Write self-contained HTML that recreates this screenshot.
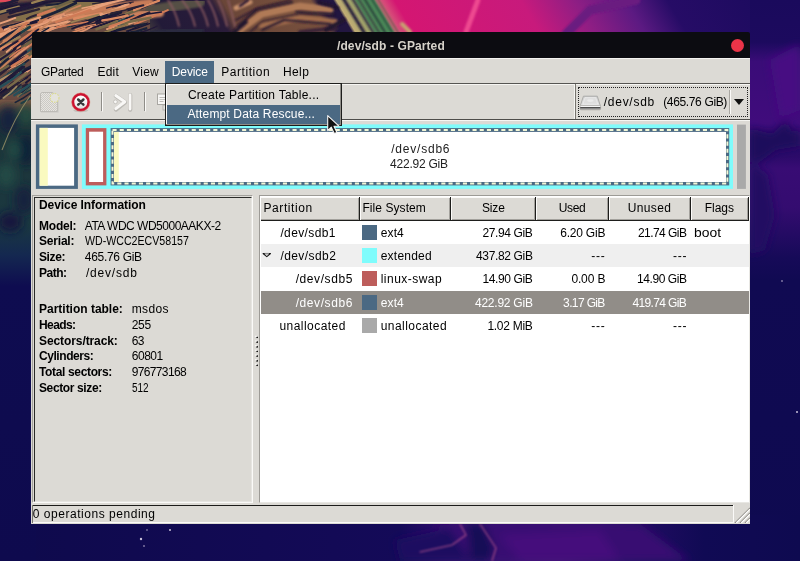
<!DOCTYPE html>
<html lang="en"><head><meta charset="utf-8"><title>/dev/sdb - GParted</title>
<style>
*{box-sizing:border-box;margin:0;padding:0}
html,body{width:800px;height:561px;overflow:hidden}
body{position:relative;font-family:"Liberation Sans",sans-serif;font-size:12px;background:#0e0a50}
.a{position:absolute}
.t{position:absolute;white-space:pre;line-height:16px;font-size:12px;color:#000}
.b{font-weight:700}
#bg{left:0;top:0;width:800px;height:561px}
#win{left:31px;top:58px;width:719px;height:466px;background:#dcdad5}
</style></head><body>
<svg id="bg" class="a" width="800" height="561" viewBox="0 0 800 561">
<defs>
<linearGradient id="gtop" x1="0" x2="1" y1="0" y2="0">
<stop offset="0" stop-color="#7a5244"/><stop offset=".155" stop-color="#86604a"/><stop offset=".185" stop-color="#4c4640"/>
<stop offset=".21" stop-color="#221a38"/><stop offset=".285" stop-color="#2a1c3a"/><stop offset=".30" stop-color="#6a4638"/>
<stop offset=".405" stop-color="#7a523e"/><stop offset=".415" stop-color="#221640"/><stop offset=".432" stop-color="#221640"/>
<stop offset=".436" stop-color="#c0ac74"/><stop offset=".455" stop-color="#9aa068"/><stop offset=".46" stop-color="#4e8a58"/>
<stop offset=".48" stop-color="#4e8a58"/><stop offset=".485" stop-color="#d8607c"/><stop offset=".505" stop-color="#d41672"/><stop offset=".655" stop-color="#c81a7c"/>
<stop offset=".72" stop-color="#8e1e84"/><stop offset=".78" stop-color="#5c1a82"/><stop offset=".83" stop-color="#260c66"/>
<stop offset="1" stop-color="#180a5c"/></linearGradient>
<linearGradient id="gleft" x1="0" x2="0" y1="0" y2="1">
<stop offset="0" stop-color="#7a5244"/><stop offset=".12" stop-color="#8a6048"/><stop offset=".145" stop-color="#54483c"/>
<stop offset=".17" stop-color="#1e3438"/><stop offset=".36" stop-color="#1a3840"/><stop offset=".42" stop-color="#142850"/>
<stop offset=".48" stop-color="#0e0c50"/><stop offset="1" stop-color="#0e0a4e"/></linearGradient>
<linearGradient id="gright" x1="0" x2="0" y1="0" y2="1">
<stop offset="0" stop-color="#1a0a5c"/><stop offset=".075" stop-color="#1c0a5e"/><stop offset=".11" stop-color="#3a0c78"/><stop offset=".22" stop-color="#400c7c"/>
<stop offset=".25" stop-color="#2a0a68"/><stop offset=".28" stop-color="#2c0a6a"/><stop offset=".3" stop-color="#380c74"/><stop offset=".37" stop-color="#340c70"/>
<stop offset=".46" stop-color="#160a58"/><stop offset=".5" stop-color="#100a52"/><stop offset="1" stop-color="#0e0a50"/></linearGradient>
<linearGradient id="gbot" x1="0" x2="1" y1="0" y2="0">
<stop offset="0" stop-color="#0e0a4c"/><stop offset=".5" stop-color="#140a58"/><stop offset=".56" stop-color="#340c70"/>
<stop offset=".7" stop-color="#400e78"/><stop offset=".78" stop-color="#260c66"/><stop offset=".88" stop-color="#100a54"/><stop offset="1" stop-color="#0e0a50"/></linearGradient>
<filter id="bl0"><feGaussianBlur stdDeviation="0.7"/></filter>
<filter id="bl1"><feGaussianBlur stdDeviation="1.2"/></filter>
<filter id="bl3"><feGaussianBlur stdDeviation="4"/></filter>
</defs>
<rect width="800" height="561" fill="#0e0a50"/>
<g transform="matrix(1 0 0.6 1 -10 0)"><rect x="-20" y="0" width="840" height="40" fill="url(#gtop)"/></g>
<rect x="750" y="0" width="50" height="561" fill="url(#gright)"/>
<rect x="0" y="515" width="800" height="46" fill="url(#gbot)"/>
<rect x="0" y="33" width="36" height="528" fill="url(#gleft)"/>
<g stroke-linecap="round" fill="none" filter="url(#bl0)">
<path d="M-5 0H150V34H34V100H-5Z" fill="#6a4c42" stroke="none"/>
<path d="M-5 10L60 3L150 -4" stroke="#1a1236" stroke-width="9" filter="url(#bl1)"/>
<path d="M-2 1L9 0" stroke="#e24a5a" stroke-width="6" filter="url(#bl1)"/>
<path d="M20 19L55 9L100 4" stroke="#84704a" stroke-width="12" filter="url(#bl1)"/>
<path d="M-5 32L50 20L100 9L150 3" stroke="#c87c58" stroke-width="8" filter="url(#bl1)"/>
<path d="M95 25L140 15L160 13" stroke="#cc8460" stroke-width="8" filter="url(#bl1)"/>
<path d="M130 36L200 30" stroke="#2a2a40" stroke-width="8" filter="url(#bl1)"/>
<path d="M150 10L200 2" stroke="#545044" stroke-width="10" filter="url(#bl1)"/>
<path d="M57.9 21.0Q76.1 14.3 91.9 7.7" stroke="#e09470" stroke-width="2.0"/>
<path d="M82.1 8.3Q97.4 5.4 116.4 -0.4" stroke="#e8a07a" stroke-width="1.4"/>
<path d="M134.7 24.2Q149.4 18.3 167.8 10.1" stroke="#d07a56" stroke-width="2.1"/>
<path d="M79.9 28.5Q95.6 23.7 109.9 19.3" stroke="#221a38" stroke-width="2.0"/>
<path d="M31.7 35.9Q41.9 30.4 53.8 27.6" stroke="#e8a07a" stroke-width="2.2"/>
<path d="M104.9 15.6Q111.7 14.9 120.8 11.5" stroke="#e09470" stroke-width="1.3"/>
<path d="M-2.2 14.8Q12.1 10.0 28.1 7.7" stroke="#1c2238" stroke-width="1.6"/>
<path d="M39.9 34.8Q54.8 28.1 70.0 21.4" stroke="#e8a07a" stroke-width="1.4"/>
<path d="M92.3 8.4Q106.2 2.9 116.2 0.4" stroke="#e8a07a" stroke-width="2.0"/>
<path d="M119.7 35.1Q132.7 31.3 144.6 29.8" stroke="#dc8a62" stroke-width="1.5"/>
<path d="M138.4 9.3Q148.9 4.7 161.7 -0.6" stroke="#1c2238" stroke-width="2.5"/>
<path d="M-7.7 14.5Q7.1 9.8 18.9 6.9" stroke="#9a8054" stroke-width="2.9"/>
<path d="M13.1 32.9Q22.9 30.9 32.2 27.7" stroke="#e09470" stroke-width="2.2"/>
<path d="M48.2 18.4Q55.5 17.5 64.9 15.3" stroke="#1a1636" stroke-width="1.4"/>
<path d="M28.5 30.0Q45.9 26.5 66.2 23.1" stroke="#c8845c" stroke-width="1.9"/>
<path d="M88.0 22.9Q96.7 18.6 107.1 14.5" stroke="#221a38" stroke-width="2.7"/>
<path d="M-0.9 8.0Q7.6 5.8 17.5 2.1" stroke="#221a38" stroke-width="1.3"/>
<path d="M68.3 34.2Q78.0 30.4 91.4 25.9" stroke="#dc8a62" stroke-width="1.9"/>
<path d="M1.2 4.3Q10.7 3.0 18.3 -0.7" stroke="#221a38" stroke-width="2.8"/>
<path d="M100.6 25.9Q117.9 22.5 132.4 19.5" stroke="#8c7448" stroke-width="1.7"/>
<path d="M108.6 31.4Q118.3 25.1 131.5 21.2" stroke="#28505a" stroke-width="2.1"/>
<path d="M7.3 10.7Q23.3 7.2 39.7 1.5" stroke="#221a38" stroke-width="2.1"/>
<path d="M2.6 27.5Q13.0 25.2 23.4 22.2" stroke="#1a1636" stroke-width="2.0"/>
<path d="M128.1 10.7Q143.8 5.8 157.5 1.9" stroke="#1c2238" stroke-width="1.4"/>
<path d="M129.5 18.9Q140.6 17.0 149.3 12.5" stroke="#2a2034" stroke-width="2.3"/>
<path d="M122.0 15.1Q132.7 10.5 140.2 8.8" stroke="#8c7448" stroke-width="1.5"/>
<path d="M-0.4 35.3Q9.8 31.7 20.7 27.2" stroke="#e8a07a" stroke-width="1.8"/>
<path d="M64.1 12.7Q73.7 7.8 80.4 5.6" stroke="#c8845c" stroke-width="2.0"/>
<path d="M96.3 21.4Q109.4 16.0 120.3 12.0" stroke="#1a1636" stroke-width="2.2"/>
<path d="M106.9 29.1Q123.2 26.5 137.0 21.1" stroke="#e8a07a" stroke-width="1.8"/>
<path d="M92.7 8.8Q107.2 3.1 125.4 -0.9" stroke="#e8a07a" stroke-width="2.5"/>
<path d="M106.8 20.3Q124.1 16.2 139.2 9.5" stroke="#6e6244" stroke-width="2.1"/>
<path d="M3.1 33.7Q11.3 31.8 23.4 29.5" stroke="#d07a56" stroke-width="1.8"/>
<path d="M87.9 19.1Q103.5 14.3 117.4 7.7" stroke="#8c7448" stroke-width="1.8"/>
<path d="M86.2 26.4Q106.3 20.3 124.1 15.2" stroke="#2a2034" stroke-width="2.8"/>
<path d="M126.5 31.1Q137.1 28.6 149.5 23.6" stroke="#1a1636" stroke-width="1.3"/>
<path d="M22.7 31.5Q33.0 27.7 46.2 26.1" stroke="#dc8a62" stroke-width="1.4"/>
<path d="M67.5 26.6Q86.1 22.3 103.2 16.4" stroke="#1e3c44" stroke-width="1.8"/>
<path d="M55.9 21.0Q70.1 17.4 83.8 15.0" stroke="#c8845c" stroke-width="2.3"/>
<path d="M47.2 30.7Q55.6 28.0 65.8 25.3" stroke="#e09470" stroke-width="1.6"/>
<path d="M51.7 5.9Q70.1 1.1 89.3 -5.4" stroke="#2a2034" stroke-width="1.2"/>
<path d="M74.4 18.7Q88.9 15.8 100.9 13.5" stroke="#dc8a62" stroke-width="2.9"/>
<path d="M26.9 18.8Q33.9 15.1 44.6 13.0" stroke="#2a2034" stroke-width="2.0"/>
<path d="M95.3 35.2Q110.1 30.2 125.9 24.4" stroke="#221a38" stroke-width="1.6"/>
<path d="M5.7 26.9Q19.9 23.9 37.9 20.2" stroke="#1c2238" stroke-width="2.3"/>
<path d="M113.8 22.9Q123.9 19.4 133.6 15.3" stroke="#2c4a50" stroke-width="1.9"/>
<path d="M10.5 33.1Q23.3 28.3 32.7 25.2" stroke="#8c7448" stroke-width="2.5"/>
<path d="M139.8 32.2Q148.1 30.6 156.9 26.4" stroke="#221a38" stroke-width="1.4"/>
<path d="M71.5 26.0Q86.8 20.7 99.6 16.3" stroke="#1a1636" stroke-width="1.4"/>
<path d="M95.7 23.6Q109.4 18.4 121.0 12.5" stroke="#221a38" stroke-width="2.5"/>
<path d="M125.8 18.4Q145.3 14.0 161.4 12.0" stroke="#1a1636" stroke-width="1.5"/>
<path d="M-0.7 34.4Q12.0 30.7 25.3 26.5" stroke="#e8a07a" stroke-width="1.7"/>
<path d="M-8.0 25.8Q5.3 22.2 15.3 17.9" stroke="#e8a07a" stroke-width="1.9"/>
<path d="M4.2 28.9Q20.8 25.2 36.4 22.1" stroke="#1a1636" stroke-width="2.5"/>
<path d="M79.9 19.1Q87.7 18.2 98.2 14.7" stroke="#d07a56" stroke-width="1.7"/>
<path d="M10.0 13.2Q27.2 6.5 42.6 2.4" stroke="#221a38" stroke-width="2.7"/>
<path d="M41.3 17.9Q57.6 11.9 75.8 3.0" stroke="#1c2238" stroke-width="2.8"/>
<path d="M34.8 9.3Q47.9 7.7 59.8 4.9" stroke="#9a8054" stroke-width="2.3"/>
<path d="M104.3 35.3Q113.0 30.9 125.3 28.3" stroke="#1a1636" stroke-width="2.4"/>
<path d="M46.4 5.3Q60.5 4.3 74.1 0.2" stroke="#1c2238" stroke-width="2.1"/>
<path d="M85.7 29.5Q105.8 24.4 122.2 17.2" stroke="#1a1636" stroke-width="1.8"/>
<path d="M71.3 22.3Q84.5 17.8 98.9 14.6" stroke="#9a8054" stroke-width="1.8"/>
<path d="M88.3 21.1Q105.4 16.1 121.5 11.7" stroke="#1c2238" stroke-width="1.2"/>
<path d="M92.6 3.8Q110.5 1.3 131.7 -3.6" stroke="#2a2034" stroke-width="1.3"/>
<path d="M54.4 18.2Q65.0 15.2 72.3 14.2" stroke="#e8a07a" stroke-width="1.3"/>
<path d="M134.0 10.3Q144.8 5.6 159.1 0.6" stroke="#dc8a62" stroke-width="2.3"/>
<path d="M8.6 17.1Q23.3 13.9 39.0 9.2" stroke="#2a2034" stroke-width="2.4"/>
<path d="M112.3 6.7Q122.6 5.2 130.6 2.9" stroke="#221a38" stroke-width="1.6"/>
<path d="M43.9 11.2Q58.7 6.5 75.6 -1.2" stroke="#6e6244" stroke-width="2.4"/>
<path d="M127.4 31.9Q135.7 26.6 147.7 23.0" stroke="#1a1636" stroke-width="1.2"/>
<path d="M31.7 27.7Q46.4 21.8 61.2 17.7" stroke="#e8a07a" stroke-width="2.2"/>
<path d="M41.6 27.3Q56.0 25.2 67.7 21.5" stroke="#e8a07a" stroke-width="2.3"/>
<path d="M56.7 27.4Q71.5 24.8 87.8 21.8" stroke="#d07a56" stroke-width="1.7"/>
<path d="M101.9 33.3Q114.9 28.6 127.5 24.3" stroke="#8c7448" stroke-width="2.0"/>
<path d="M75.2 29.7Q83.7 26.4 95.6 24.4" stroke="#dc8a62" stroke-width="1.3"/>
<path d="M98.7 25.6Q115.4 19.8 128.7 15.0" stroke="#221a38" stroke-width="1.6"/>
<path d="M56.1 22.2Q72.0 16.0 89.3 10.3" stroke="#d07a56" stroke-width="2.0"/>
<path d="M130.2 32.4Q138.6 31.2 146.2 28.3" stroke="#1c2238" stroke-width="2.5"/>
<path d="M100.8 14.5Q115.6 10.2 128.3 3.7" stroke="#e8a07a" stroke-width="2.7"/>
<path d="M32.2 2.8Q52.4 -3.6 70.1 -7.3" stroke="#9a8054" stroke-width="2.4"/>
<path d="M72.0 28.8Q78.9 26.1 89.5 22.6" stroke="#1a1636" stroke-width="1.6"/>
<path d="M4.6 29.8Q22.3 23.1 40.3 17.3" stroke="#e8a07a" stroke-width="2.1"/>
<path d="M111.1 13.3Q128.9 9.0 143.4 5.2" stroke="#2a2034" stroke-width="2.1"/>
<path d="M113.9 24.7Q132.8 21.3 150.6 17.8" stroke="#7a6a48" stroke-width="2.4"/>
<path d="M96.5 29.3Q107.2 25.8 116.9 21.2" stroke="#7a6a48" stroke-width="2.5"/>
<path d="M38.1 15.2Q44.8 12.7 54.5 9.4" stroke="#d07a56" stroke-width="2.9"/>
<path d="M106.4 8.1Q119.1 4.1 133.3 2.0" stroke="#2a2034" stroke-width="1.2"/>
<path d="M43.9 22.0Q53.0 17.1 63.8 14.2" stroke="#e09470" stroke-width="2.3"/>
<path d="M103.6 12.6Q116.2 9.9 125.4 8.1" stroke="#c8845c" stroke-width="2.1"/>
<path d="M72.1 34.5Q83.1 32.0 91.8 26.5" stroke="#e09470" stroke-width="1.8"/>
<path d="M109.2 28.3Q119.0 23.5 129.1 19.5" stroke="#dc8a62" stroke-width="2.1"/>
<path d="M109.5 26.3Q127.2 20.7 141.5 13.3" stroke="#d07a56" stroke-width="1.8"/>
<path d="M9.7 27.2Q17.2 25.9 28.8 22.7" stroke="#c8845c" stroke-width="2.2"/>
<path d="M116.9 30.0Q131.7 25.8 145.0 24.2" stroke="#1c2238" stroke-width="2.2"/>
<path d="M102.3 20.5Q113.4 18.9 127.8 15.4" stroke="#dc8a62" stroke-width="2.3"/>
<path d="M-4.1 74.8Q10.5 68.1 25.9 61.0" stroke="#e8a07a" stroke-width="1.6"/>
<path d="M25.9 82.7Q36.4 75.2 47.1 64.8" stroke="#1a1636" stroke-width="1.8"/>
<path d="M19.5 81.9Q29.8 74.9 43.1 66.3" stroke="#2a2034" stroke-width="1.6"/>
<path d="M20.5 94.0Q28.9 91.1 35.2 85.3" stroke="#1e3c44" stroke-width="2.7"/>
<path d="M16.7 75.6Q26.4 71.4 32.5 66.9" stroke="#221a38" stroke-width="1.7"/>
<path d="M15.5 61.2Q22.9 56.2 29.3 53.0" stroke="#dc8a62" stroke-width="1.3"/>
<path d="M-4.7 42.3Q1.1 37.9 7.3 31.7" stroke="#dc8a62" stroke-width="2.8"/>
<path d="M1.0 92.7Q12.4 85.8 24.7 80.0" stroke="#7a6a48" stroke-width="2.5"/>
<path d="M3.7 41.0Q19.0 31.7 33.4 25.3" stroke="#d07a56" stroke-width="2.2"/>
<path d="M0.6 61.9Q9.6 52.9 20.3 46.3" stroke="#dc8a62" stroke-width="1.7"/>
<path d="M15.1 56.2Q23.8 49.6 35.4 41.7" stroke="#d07a56" stroke-width="2.0"/>
<path d="M25.5 73.0Q36.1 63.5 44.5 56.2" stroke="#e8a07a" stroke-width="2.2"/>
<path d="M6.2 66.7Q17.9 58.7 32.7 47.8" stroke="#28505a" stroke-width="1.9"/>
<path d="M-6.8 97.9Q5.2 91.2 13.2 82.6" stroke="#1a1636" stroke-width="2.6"/>
<path d="M10.9 47.8Q21.6 38.8 33.4 31.8" stroke="#d07a56" stroke-width="2.4"/>
<path d="M10.7 91.9Q19.4 87.7 26.8 84.7" stroke="#2a2034" stroke-width="2.7"/>
<path d="M13.5 87.2Q20.7 81.2 27.6 77.5" stroke="#1a1636" stroke-width="1.2"/>
<path d="M3.4 61.5Q11.8 54.6 23.9 46.6" stroke="#221a38" stroke-width="2.2"/>
<path d="M-6.5 101.4Q3.2 96.6 12.3 92.3" stroke="#2a2034" stroke-width="2.7"/>
<path d="M-1.3 96.9Q12.2 86.6 22.1 77.3" stroke="#2a2034" stroke-width="1.3"/>
<path d="M7.8 66.9Q15.8 61.3 24.9 56.7" stroke="#1a1636" stroke-width="1.8"/>
<path d="M18.0 96.5Q24.4 90.5 31.7 87.3" stroke="#7a6a48" stroke-width="2.0"/>
<path d="M14.4 73.7Q28.7 68.6 39.0 62.2" stroke="#1c2238" stroke-width="2.6"/>
<path d="M21.1 63.6Q33.2 55.5 44.8 45.1" stroke="#c8845c" stroke-width="2.4"/>
<path d="M-8.3 90.7Q-3.4 85.1 2.8 82.2" stroke="#2a2034" stroke-width="1.6"/>
<path d="M22.0 92.2Q32.8 83.1 44.0 75.1" stroke="#1c2238" stroke-width="1.6"/>
<path d="M0.3 49.2Q13.5 38.0 25.1 29.6" stroke="#e09470" stroke-width="2.6"/>
<path d="M0.0 95.0Q6.6 91.5 15.7 87.3" stroke="#8c7448" stroke-width="2.8"/>
<path d="M-4.7 96.3Q3.3 91.5 13.2 87.1" stroke="#1a1636" stroke-width="2.7"/>
<path d="M21.4 61.4Q28.6 55.0 38.7 47.4" stroke="#6e6244" stroke-width="2.6"/>
<path d="M-1.8 86.1Q11.9 77.7 22.6 68.9" stroke="#2c4a50" stroke-width="2.2"/>
<path d="M-3.3 59.3Q7.1 54.1 13.5 49.3" stroke="#7a6a48" stroke-width="1.3"/>
<path d="M8.1 74.0Q16.9 68.5 28.5 60.0" stroke="#1c2238" stroke-width="2.1"/>
<path d="M-4.8 51.5Q1.3 47.5 11.2 43.7" stroke="#dc8a62" stroke-width="2.8"/>
<path d="M16.5 64.6Q23.9 59.1 28.0 54.7" stroke="#6e6244" stroke-width="2.4"/>
<path d="M6.4 42.0Q16.7 35.4 29.7 27.1" stroke="#1e3c44" stroke-width="2.7"/>
<path d="M-5.7 78.9Q5.1 70.6 14.1 63.8" stroke="#2a2034" stroke-width="2.3"/>
<path d="M8.7 94.6Q15.3 91.9 21.3 86.9" stroke="#2c4a50" stroke-width="2.3"/>
<path d="M-5.2 49.7Q8.9 40.1 20.1 33.3" stroke="#2a2034" stroke-width="2.3"/>
<path d="M-7.7 51.4Q3.4 40.9 15.9 33.2" stroke="#c8845c" stroke-width="1.3"/>
<path d="M-0.1 79.8Q12.3 71.4 24.5 63.8" stroke="#2c4a50" stroke-width="2.2"/>
<path d="M-2.6 71.8Q8.1 61.2 19.9 52.3" stroke="#c8845c" stroke-width="1.8"/>
<path d="M24.9 42.7Q38.9 30.6 50.9 21.3" stroke="#c8845c" stroke-width="1.9"/>
<path d="M-2.9 97.0Q9.5 90.6 18.1 83.1" stroke="#2a2034" stroke-width="2.7"/>
<path d="M15.2 102.5Q23.2 98.7 31.4 92.3" stroke="#1c2238" stroke-width="1.5"/>
<path d="M1.8 61.6Q6.1 56.9 14.0 53.1" stroke="#7a6a48" stroke-width="2.2"/>
<path d="M14.4 95.3Q23.5 89.5 33.5 82.0" stroke="#28505a" stroke-width="2.5"/>
<path d="M-3.8 62.2Q6.9 55.4 15.6 48.8" stroke="#221a38" stroke-width="2.1"/>
<path d="M6.6 80.1Q14.8 74.5 21.4 69.7" stroke="#2a2034" stroke-width="1.2"/>
<path d="M-1.6 41.2Q7.6 33.6 19.0 28.4" stroke="#1c2238" stroke-width="2.2"/>
<path d="M-9.8 86.6Q1.1 79.0 15.8 72.4" stroke="#b08a64" stroke-width="2.6"/>
<path d="M2.6 45.3Q10.4 41.4 19.8 36.9" stroke="#9a8054" stroke-width="2.2"/>
<path d="M6.6 52.0Q12.6 46.6 18.3 43.3" stroke="#e8a07a" stroke-width="1.8"/>
<path d="M14.9 56.7Q22.3 51.1 28.1 46.2" stroke="#e09470" stroke-width="1.6"/>
<path d="M2.7 95.4Q13.3 90.7 21.0 84.4" stroke="#1c2238" stroke-width="1.3"/>
<path d="M6.3 40.7Q16.9 31.4 26.9 23.0" stroke="#d07a56" stroke-width="2.6"/>
<path d="M-7.4 89.6Q-2.6 84.8 5.7 80.7" stroke="#1c2238" stroke-width="1.8"/>
<path d="M0.5 71.8Q12.6 62.4 26.0 51.6" stroke="#221a38" stroke-width="2.4"/>
<path d="M7.8 87.5Q16.4 81.6 26.5 73.2" stroke="#7a6a48" stroke-width="2.5"/>
<path d="M22.3 47.7Q29.4 42.8 38.2 36.5" stroke="#6e6244" stroke-width="2.5"/>
<path d="M21.7 44.6Q35.9 35.3 48.7 27.8" stroke="#1c2238" stroke-width="1.5"/>
<path d="M5.8 79.4Q10.5 74.4 18.6 72.2" stroke="#9a8054" stroke-width="1.5"/>
<path d="M8.6 79.2Q24.0 71.1 36.1 65.7" stroke="#1a1636" stroke-width="1.7"/>
<path d="M-6.8 72.5Q1.0 63.9 10.7 56.9" stroke="#1c2238" stroke-width="2.1"/>
<path d="M-3.6 73.3Q3.4 68.3 8.3 65.8" stroke="#6e6244" stroke-width="2.5"/>
<path d="M19.3 96.6Q27.9 89.5 34.0 84.2" stroke="#2c4a50" stroke-width="1.1"/>
<path d="M3.1 50.0Q10.7 45.2 17.8 41.2" stroke="#221a38" stroke-width="1.9"/>
<path d="M-1.1 87.9Q11.5 80.8 20.8 72.3" stroke="#28505a" stroke-width="2.3"/>
<path d="M21.3 103.3Q31.1 97.4 39.4 94.2" stroke="#1e3c44" stroke-width="2.0"/>
<path d="M11.6 66.4Q19.2 61.9 27.6 56.1" stroke="#d07a56" stroke-width="2.5"/>
<path d="M-2.4 85.8Q8.3 77.6 22.0 66.5" stroke="#1c2238" stroke-width="2.1"/>
<path d="M12.4 48.0Q24.6 37.6 35.5 28.8" stroke="#d07a56" stroke-width="1.7"/>
<path d="M-5.0 40.9Q3.4 34.7 10.5 29.2" stroke="#e8a07a" stroke-width="1.5"/>
<path d="M13.8 48.9Q26.3 40.0 38.4 29.3" stroke="#1a1636" stroke-width="1.7"/>
<path d="M3.4 97.9Q11.4 92.7 16.6 86.5" stroke="#a08a64" stroke-width="1.8"/>
<path d="M-3.5 86.2Q10.5 77.5 24.0 66.9" stroke="#221a38" stroke-width="2.3"/>
<path d="M-6.4 51.2Q8.2 41.6 19.7 33.4" stroke="#1c2238" stroke-width="1.4"/>
<path d="M9.6 57.5Q16.4 51.1 25.1 47.3" stroke="#d07a56" stroke-width="1.7"/>
<path d="M-9.6 97.1Q-2.7 94.5 1.8 88.9" stroke="#1a1636" stroke-width="1.3"/>
<path d="M3.5 42.1Q12.4 35.2 20.1 27.7" stroke="#c8845c" stroke-width="2.0"/>
</g>
<g filter="url(#bl3)">
<ellipse cx="8" cy="120" rx="10" ry="14" fill="#12203c"/>
<ellipse cx="26" cy="150" rx="9" ry="16" fill="#102038"/>
<ellipse cx="6" cy="175" rx="10" ry="12" fill="#224a44"/>
<ellipse cx="24" cy="200" rx="10" ry="14" fill="#14243e"/>
<ellipse cx="10" cy="222" rx="12" ry="10" fill="#12183e"/>
<ellipse cx="26" cy="115" rx="8" ry="10" fill="#24483f"/>
<ellipse cx="14" cy="150" rx="6" ry="10" fill="#244c44"/>
</g>
<path d="M2 150Q14 118 30 96" stroke="#9a9468" stroke-width="1.1" fill="none" opacity=".8"/>
<g stroke="#8a5a60" stroke-width="1.6" fill="none" stroke-linecap="round" filter="url(#bl1)">
<path d="M168 0Q176 12 179 26"/>
<path d="M182 0Q192 12 195 26"/>
<path d="M196 0Q205 12 208 26"/>
<path d="M208 0Q215 12 218 26"/>
<path d="M218 0Q224 12 227 26"/>
<path d="M228 0Q232 12 235 26"/>
</g>
<g fill="none" stroke-linecap="round" filter="url(#bl1)">
<path d="M240 30L262 14L300 6L330 10" stroke="#b07a56" stroke-width="7"/>
<path d="M262 26L300 18L335 22" stroke="#a06c4c" stroke-width="6"/>
<path d="M236 8L250 2" stroke="#c8906a" stroke-width="5"/>
<path d="M250 32L262 22L300 14L334 16" stroke="#2a1830" stroke-width="1.6"/>
<path d="M236 20L258 8L290 0" stroke="#2a1830" stroke-width="1.8"/>
<path d="M300 32L336 28" stroke="#3a2438" stroke-width="4"/>
</g>
<g fill="none" stroke-linecap="round" filter="url(#bl1)">
<path d="M343 -2L365 34" stroke="#1e1438" stroke-width="3"/>
<path d="M352 -2L374 34" stroke="#2a2040" stroke-width="2"/>
<path d="M358 -2L380 34" stroke="#3a3a40" stroke-width="1.6"/>
<path d="M364 -2L386 34" stroke="#26403a" stroke-width="2.2"/>
<path d="M371 -2L393 34" stroke="#2a5040" stroke-width="1.8"/>
<path d="M377 -2L399 34" stroke="#6a5a50" stroke-width="1.6"/>
<path d="M238 26L256 10" stroke="#24142e" stroke-width="2.2"/>
<path d="M256 10L292 2" stroke="#24142e" stroke-width="2"/>
<path d="M262 30L284 20" stroke="#24142e" stroke-width="2"/>
<path d="M284 20L330 24" stroke="#24142e" stroke-width="2.2"/>
<path d="M296 12L334 14" stroke="#24142e" stroke-width="1.8"/>
<path d="M240 6L248 0" stroke="#24142e" stroke-width="2.5"/>
<path d="M318 2L338 8" stroke="#24142e" stroke-width="3"/>
<path d="M326 30L344 20" stroke="#24142e" stroke-width="4"/>
<path d="M232 34L246 22" stroke="#24142e" stroke-width="4"/>
</g>
<g fill="none" stroke-linecap="round" filter="url(#bl1)">
<path d="M478 0L466 32" stroke="#ee4a90" stroke-width="5"/>
<path d="M402 24L410 32" stroke="#c8a070" stroke-width="4"/>
<path d="M566 34L590 10L636 0" stroke="#6a1a80" stroke-width="9"/>
</g>
<g filter="url(#bl3)">
<path d="M750 128L772 134L786 120L792 132L800 130V146L776 150L760 162L750 160Z" fill="#1c0a5c"/>
<path d="M750 160L768 175L775 215L765 250L750 255Z" fill="#220a62"/>
<path d="M770 60L800 44V110L780 118Z" fill="#460e82"/>
<path d="M440 525L520 520L640 524L690 561H430Z" fill="#380c72"/>
<path d="M500 535L600 530L620 561H520Z" fill="#440e7c"/>
<path d="M395 540L450 528L470 561H400Z" fill="#1a0a60"/>
<path d="M464 524L484 524L494 548L490 561H470L468 536Z" fill="#160a56"/>
</g>
<g fill="none" stroke="#b0508c" stroke-width="1.1" stroke-linecap="round" filter="url(#bl1)">
<path d="M420 552L452 545L466 535L460 524"/><path d="M480 524L496 548L492 561"/>
</g>
<circle cx="141" cy="539" r="1.2" fill="#c8c0d8"/>
<circle cx="144" cy="546" r="0.8" fill="#c8c0d8"/>
<circle cx="170" cy="530" r="1" fill="#c8c0d8"/>
<circle cx="147" cy="530" r="0.7" fill="#c8c0d8"/>
<circle cx="797" cy="412" r="1" fill="#c8c0d8"/>
<circle cx="782" cy="281" r="0.8" fill="#c8c0d8"/>
</svg>
<div id="win" class="a"></div>
<!-- title bar -->
<div class="a" style="left:32px;top:32px;width:718px;height:26px;background:#0c0c11;border-radius:2px 2px 0 0"></div>
<div class="a" style="left:731px;top:39px;width:13px;height:13px;border-radius:50%;background:#ea3448"></div>
<!-- menubar -->
<div class="a" style="left:31px;top:58px;width:719px;height:1px;background:#f4f3f0"></div>
<div class="a" style="left:31px;top:83px;width:719px;height:1px;background:#565552"></div>
<div class="a" style="left:31px;top:84px;width:719px;height:1px;background:#f6f5f2"></div>
<div class="a" style="left:165px;top:61px;width:49px;height:22px;background:#4b6983"></div>
<!-- toolbar -->
<div class="a" style="left:31px;top:119px;width:719px;height:1px;background:#4e4d4a"></div>
<div class="a" style="left:31px;top:120px;width:719px;height:1px;background:#f6f5f2"></div>
<svg class="a" style="left:36px;top:86px" width="132" height="32" viewBox="36 86 132 32">
<defs>
<pattern id="stip" width="2" height="2" patternUnits="userSpaceOnUse"><rect width="2" height="2" fill="#e6e4e0"/><rect width="1" height="1" fill="#cbc9c4"/><rect x="1" y="1" width="1" height="1" fill="#cbc9c4"/></pattern>
<linearGradient id="delg" x1="0" x2="0" y1="0" y2="1"><stop offset="0" stop-color="#ffffff"/><stop offset=".6" stop-color="#f2f2f2"/><stop offset="1" stop-color="#d6d6d6"/></linearGradient>
</defs>
<!-- new (insensitive) -->
<path d="M41.5 92.5H52.5L57.5 97V111.5H40.5V93.5Z" fill="url(#stip)" stroke="#bdbbb6" stroke-width="1"/><path d="M41 112.4H58.3V98" fill="none" stroke="#cfcdc8" stroke-width=".9"/>
<circle cx="54.6" cy="97.8" r="4.4" fill="#e4e3dd" stroke="#dcdc8c" stroke-width="1.1" stroke-dasharray="1.6 1.3"/>
<!-- delete -->
<ellipse cx="80.8" cy="110.6" rx="7.5" ry="1.6" fill="#b9b7b2" opacity=".7"/>
<circle cx="80.8" cy="102.1" r="7.9" fill="url(#delg)" stroke="#cc1230" stroke-width="2.7"/>
<circle cx="80.8" cy="102.1" r="9.2" fill="none" stroke="#e0907a" stroke-width=".6" opacity=".7"/>
<path d="M78.2 99.5L83.4 104.7M83.4 99.5L78.2 104.7" stroke="#38383a" stroke-width="2.5" stroke-linecap="round"/>
<!-- separators -->
<rect x="101" y="92" width="1" height="19" fill="#8f8d88"/><rect x="102" y="92.5" width="1" height="19" fill="#fbfaf8"/>
<rect x="144" y="92" width="1" height="19" fill="#8f8d88"/><rect x="145" y="92.5" width="1" height="19" fill="#fbfaf8"/>
<!-- apply-all (insensitive) -->
<g fill="none" stroke-linecap="round" stroke-linejoin="round">
<path d="M116 96L125 102.3L116 109.4" stroke="#bcbab5" stroke-width="4.4"/>
<path d="M115.8 95.5L124.8 101.7L115.8 108.6" stroke="#f9f8f6" stroke-width="3"/>
<path d="M130.2 95V109.8" stroke="#bcbab5" stroke-width="4.2"/>
<path d="M130 94.8V109" stroke="#f9f8f6" stroke-width="2.8"/>
</g>
<circle cx="115.4" cy="101.8" r="1.9" fill="#f9f8f6" stroke="#bcbab5" stroke-width=".8"/>
<!-- 5th icon (clipped by menu) -->
<rect x="157.5" y="94" width="10" height="10.5" fill="#f7f6f4" stroke="#a9a7a2" stroke-width="1"/>
<rect x="159.5" y="97" width="6" height="1" fill="#bdbbb6"/><rect x="159.5" y="99" width="6" height="1" fill="#c9c7c2"/><rect x="159.5" y="101" width="4" height="1" fill="#bdbbb6"/>
<rect x="163" y="105" width="3" height="5" fill="#e9e8e4" stroke="#a9a7a2" stroke-width=".8"/>
</svg>

<!-- combo -->
<div class="a" style="left:574px;top:85px;width:1px;height:34px;background:#f6f5f2"></div>
<div class="a" style="left:575px;top:84px;width:1px;height:35px;background:#77756f"></div>
<div class="a" style="left:578px;top:87px;width:170px;height:30px;border:1px dotted #222"></div>
<div class="a" style="left:729px;top:90px;width:1px;height:24px;background:#a9a7a2"></div>
<div class="a" style="left:730px;top:90px;width:1px;height:24px;background:#fbfaf8"></div>
<div class="a" style="left:734px;top:99px;width:0;height:0;border-left:5px solid transparent;border-right:5px solid transparent;border-top:6px solid #111"></div>
<svg class="a" style="left:579px;top:94px" width="24" height="18" viewBox="579 94 24 18">
<defs><linearGradient id="hf" x1="0" x2="0" y1="0" y2="1"><stop offset="0" stop-color="#fafafa"/><stop offset=".3" stop-color="#fafafa"/><stop offset=".42" stop-color="#454545"/><stop offset=".7" stop-color="#8c8c8c"/><stop offset="1" stop-color="#b4b2ae"/></linearGradient>
<linearGradient id="ht" x1="0" x2="0" y1="0" y2="1"><stop offset="0" stop-color="#cfcfcf"/><stop offset="1" stop-color="#e6e6e6"/></linearGradient></defs>
<path d="M583.4 96.2H597.3L600.4 106H580.2Z" fill="url(#ht)" stroke="#a7a7a5" stroke-width=".9" stroke-linejoin="round"/>
<path d="M585 97.6H595.8L597.6 104.2H583Z" fill="#dedede" stroke="#ececec" stroke-width=".7"/>
<ellipse cx="590.3" cy="100.6" rx="3.2" ry="1.3" fill="#ebebeb"/>
<rect x="580" y="105.6" width="20.6" height="4.2" rx="1" fill="url(#hf)" stroke="#9a9996" stroke-width=".6"/>
</svg>

<!-- partition graphic -->
<svg class="a" style="left:32px;top:120px" width="719" height="74" viewBox="32 120 719 74">
<rect x="35.9" y="124.4" width="42.0" height="64.5" fill="#4b6983"/>
<rect x="39.6" y="127.9" width="34.5" height="57.8" fill="#fff"/>
<rect x="39.6" y="127.9" width="8.2" height="57.8" fill="#fafac0"/>
<rect x="81.9" y="124.4" width="651.1" height="64.5" fill="#7ffcfc"/>
<rect x="85.8" y="128.1" width="20.6" height="57.3" fill="#bd5d5b"/>
<rect x="89.1" y="131.7" width="14.0" height="50.3" fill="#fff"/>
<rect x="110.6" y="128.1" width="618.6" height="57.3" fill="#4b6983"/>
<rect x="114.0" y="131.9" width="612.0" height="50.1" fill="#fff"/>
<rect x="114.0" y="131.9" width="4.8" height="50.1" fill="#fafac0"/>
<rect x="112.5" y="130.05" width="614.9" height="53.5" fill="none" stroke="#f3f7d6" stroke-width="1.9" stroke-dasharray="4.1 3.1"/>
<rect x="737.0" y="124.6" width="8.9" height="64.3" fill="#a9a9a9"/>
</svg>
<!-- left panel -->
<div class="a" style="left:32px;top:195px;width:221px;height:308px;border:1px solid;border-color:#a3a19c #fbfaf8 #fbfaf8 #a3a19c"></div>
<div class="a" style="left:34px;top:197px;width:218px;height:305px;border:1px solid;border-color:#2a2a28 #e6e5e1 #e6e5e1 #2a2a28"></div>
<!-- pane handle -->
<svg class="a" style="left:254px;top:334px" width="6" height="36" viewBox="254 334 6 36">
<rect x="255.3" y="335.70" width="1.3" height="1.3" fill="#fff"/><path d="M256.1 338.10L257.8 338.10L257.8 336.40Z" fill="#111"/><rect x="256.6" y="336.90" width="1.2" height="1.2" fill="#111"/>
<rect x="255.3" y="340.36" width="1.3" height="1.3" fill="#fff"/><path d="M256.1 342.76L257.8 342.76L257.8 341.06Z" fill="#111"/><rect x="256.6" y="341.56" width="1.2" height="1.2" fill="#111"/>
<rect x="255.3" y="345.02" width="1.3" height="1.3" fill="#fff"/><path d="M256.1 347.42L257.8 347.42L257.8 345.72Z" fill="#111"/><rect x="256.6" y="346.22" width="1.2" height="1.2" fill="#111"/>
<rect x="255.3" y="349.68" width="1.3" height="1.3" fill="#fff"/><path d="M256.1 352.08L257.8 352.08L257.8 350.38Z" fill="#111"/><rect x="256.6" y="350.88" width="1.2" height="1.2" fill="#111"/>
<rect x="255.3" y="354.34" width="1.3" height="1.3" fill="#fff"/><path d="M256.1 356.74L257.8 356.74L257.8 355.04Z" fill="#111"/><rect x="256.6" y="355.54" width="1.2" height="1.2" fill="#111"/>
<rect x="255.3" y="359.00" width="1.3" height="1.3" fill="#fff"/><path d="M256.1 361.40L257.8 361.40L257.8 359.70Z" fill="#111"/><rect x="256.6" y="360.20" width="1.2" height="1.2" fill="#111"/>
<rect x="255.3" y="363.66" width="1.3" height="1.3" fill="#fff"/><path d="M256.1 366.06L257.8 366.06L257.8 364.36Z" fill="#111"/><rect x="256.6" y="364.86" width="1.2" height="1.2" fill="#111"/>
</svg>
<!-- table -->
<div class="a" style="left:259px;top:195px;width:491px;height:308px;background:#fff;border:1px solid #9d9b96;border-right-color:#e8e7e3;border-bottom-color:#e8e7e3"></div>
<div class="a" style="left:261px;top:197px;width:488px;height:24px;background:#dcdad5"></div>
<div class="a" style="left:261px;top:220px;width:488px;height:1px;background:#1e1e1c"></div>
<div class="a" style="left:261px;top:219px;width:488px;height:1px;background:#a3a19c"></div>
<div class="a" style="left:261px;top:197px;width:488px;height:1px;background:#fbfaf8"></div>
<div class="a" style="left:359px;top:197px;width:1px;height:23px;background:#1e1e1c"></div><div class="a" style="left:358px;top:198px;width:1px;height:22px;background:#a3a19c"></div><div class="a" style="left:360px;top:197px;width:1px;height:23px;background:#fbfaf8"></div>
<div class="a" style="left:450px;top:197px;width:1px;height:23px;background:#1e1e1c"></div><div class="a" style="left:449px;top:198px;width:1px;height:22px;background:#a3a19c"></div><div class="a" style="left:451px;top:197px;width:1px;height:23px;background:#fbfaf8"></div>
<div class="a" style="left:535px;top:197px;width:1px;height:23px;background:#1e1e1c"></div><div class="a" style="left:534px;top:198px;width:1px;height:22px;background:#a3a19c"></div><div class="a" style="left:536px;top:197px;width:1px;height:23px;background:#fbfaf8"></div>
<div class="a" style="left:608px;top:197px;width:1px;height:23px;background:#1e1e1c"></div><div class="a" style="left:607px;top:198px;width:1px;height:22px;background:#a3a19c"></div><div class="a" style="left:609px;top:197px;width:1px;height:23px;background:#fbfaf8"></div>
<div class="a" style="left:690px;top:197px;width:1px;height:23px;background:#1e1e1c"></div><div class="a" style="left:689px;top:198px;width:1px;height:22px;background:#a3a19c"></div><div class="a" style="left:691px;top:197px;width:1px;height:23px;background:#fbfaf8"></div>
<div class="a" style="left:748px;top:197px;width:1px;height:23px;background:#1e1e1c"></div><div class="a" style="left:747px;top:198px;width:1px;height:22px;background:#a3a19c"></div><div class="a" style="left:749px;top:197px;width:1px;height:23px;background:#fbfaf8"></div>
<div class="a" style="left:261px;top:244px;width:488px;height:23px;background:#efefef"></div>
<div class="a" style="left:261px;top:291px;width:488px;height:23px;background:#918d88"></div>
<!-- swatches -->
<div class="a" style="left:362px;top:225px;width:15px;height:15px;background:#4b6983"></div>
<div class="a" style="left:362px;top:248px;width:15px;height:15px;background:#7ffcfc"></div>
<div class="a" style="left:362px;top:271px;width:15px;height:15px;background:#bd5d5b"></div>
<div class="a" style="left:362px;top:295px;width:15px;height:15px;background:#4b6983"></div>
<div class="a" style="left:362px;top:318px;width:15px;height:15px;background:#a9a9a9"></div>
<svg class="a" style="left:261px;top:251px" width="12" height="8" viewBox="261 251 12 8"><path d="M263.1 253.6L270.5 253.6L266.8 256.7Z" fill="#fff" stroke="#151515" stroke-width="1.1" stroke-linejoin="round"/><path d="M264.6 253.4H269" stroke="#9a9a9a" stroke-width="1"/></svg>
<!-- status bar -->
<div class="a" style="left:32px;top:505px;width:702px;height:1px;background:#1c1c1a"></div>
<div class="a" style="left:32px;top:505px;width:1px;height:18px;background:#77756f"></div>
<div class="a" style="left:733px;top:505px;width:1px;height:18px;background:#fbfaf8"></div>
<div class="a" style="left:33px;top:522px;width:701px;height:1px;background:#fbfaf8"></div>
<svg class="a" style="left:734px;top:507px" width="16" height="16"><g stroke-width="1.2"><path d="M1 16L16 1M6 16L16 6M11 16L16 11" stroke="#8e8c87"/><path d="M2.2 16L16 2.2M7.2 16L16 7.2M12.2 16L16 12.2" stroke="#fff"/></g></svg>
<!-- popup menu -->
<div class="a" style="left:165px;top:83px;width:177px;height:43px;background:#dcdad5;border:1px solid #1e1e1c;box-shadow:inset -1px -1px 0 #8f8d88, inset 1px 1px 0 #fbfaf8"></div>
<div class="a" style="left:167px;top:105px;width:173px;height:19px;background:#4b6983"></div>
<div id="tx" class="a" style="left:0;top:0;width:800px;height:561px;will-change:transform">
<div class="t b" style="left:337.0px;top:38.0px;letter-spacing:0.10px;color:#d6d2ca">/dev/sdb - GParted</div>
<div class="t" style="left:41.0px;top:63.8px;letter-spacing:-0.32px">GParted</div>
<div class="t" style="left:97.4px;top:63.8px;letter-spacing:0.27px">Edit</div>
<div class="t" style="left:132.2px;top:63.8px;letter-spacing:0.27px">View</div>
<div class="t" style="left:171.8px;top:63.8px;letter-spacing:-0.12px;color:#fff">Device</div>
<div class="t" style="left:221.2px;top:63.8px;letter-spacing:0.56px">Partition</div>
<div class="t" style="left:282.9px;top:63.8px;letter-spacing:0.44px">Help</div>
<div class="t" style="left:187.9px;top:86.9px;letter-spacing:0.25px">Create Partition Table...</div>
<div class="t" style="left:187.4px;top:105.9px;letter-spacing:0.16px;color:#fff">Attempt Data Rescue...</div>
<div class="t" style="left:603.8px;top:93.8px;letter-spacing:0.72px">/dev/sdb</div>
<div class="t" style="left:663.2px;top:93.8px;letter-spacing:-0.35px">(465.76 GiB)</div>
<div class="t" style="left:391.2px;top:141.2px;letter-spacing:0.79px;color:#222">/dev/sdb6</div>
<div class="t" style="left:390.1px;top:156.2px;letter-spacing:-0.23px;color:#222">422.92 GiB</div>
<div class="t b" style="left:39.0px;top:197.3px;letter-spacing:-0.07px">Device Information</div>
<div class="t b" style="left:39.0px;top:217.7px;letter-spacing:-0.21px">Model:</div>
<div class="t b" style="left:39.0px;top:233.3px;letter-spacing:-0.20px">Serial:</div>
<div class="t b" style="left:39.0px;top:249.2px;letter-spacing:-0.40px">Size:</div>
<div class="t b" style="left:39.0px;top:264.8px;letter-spacing:-0.50px">Path:</div>
<div class="t" style="left:84.8px;top:217.7px;letter-spacing:-0.49px">ATA WDC WD5000AAKX-2</div>
<div class="t" style="left:84.8px;top:233.3px;transform:scaleX(0.885);transform-origin:0 0">WD-WCC2ECV58157</div>
<div class="t" style="left:84.8px;top:249.2px;letter-spacing:-0.31px">465.76 GiB</div>
<div class="t" style="left:85.9px;top:264.8px;letter-spacing:0.82px">/dev/sdb</div>
<div class="t b" style="left:39.0px;top:301.0px;letter-spacing:-0.01px">Partition table:</div>
<div class="t b" style="left:39.0px;top:317.0px;letter-spacing:-0.58px">Heads:</div>
<div class="t b" style="left:39.0px;top:332.6px;letter-spacing:-0.09px">Sectors/track:</div>
<div class="t b" style="left:39.0px;top:348.4px;letter-spacing:-0.44px">Cylinders:</div>
<div class="t b" style="left:39.0px;top:364.4px;letter-spacing:-0.35px">Total sectors:</div>
<div class="t b" style="left:39.0px;top:380.3px;letter-spacing:-0.38px">Sector size:</div>
<div class="t" style="left:131.8px;top:301.0px;letter-spacing:0.31px">msdos</div>
<div class="t" style="left:131.8px;top:317.0px;letter-spacing:-0.37px">255</div>
<div class="t" style="left:131.8px;top:332.6px;letter-spacing:-0.66px">63</div>
<div class="t" style="left:131.8px;top:348.4px;letter-spacing:-0.49px">60801</div>
<div class="t" style="left:131.8px;top:364.4px;letter-spacing:-0.66px">976773168</div>
<div class="t" style="left:131.8px;top:380.3px;transform:scaleX(0.829);transform-origin:0 0">512</div>
<div class="t" style="left:263.4px;top:200.4px;letter-spacing:0.61px">Partition</div>
<div class="t" style="left:362.4px;top:200.4px;letter-spacing:0.08px">File System</div>
<div class="t" style="left:482.0px;top:200.4px;letter-spacing:-0.18px">Size</div>
<div class="t" style="left:558.8px;top:200.4px;letter-spacing:-0.34px">Used</div>
<div class="t" style="left:627.8px;top:200.4px;letter-spacing:0.33px">Unused</div>
<div class="t" style="left:704.8px;top:200.4px;letter-spacing:-0.04px">Flags</div>
<div class="t" style="left:280.4px;top:224.9px;letter-spacing:0.37px">/dev/sdb1</div>
<div class="t" style="left:380.7px;top:224.9px;letter-spacing:0.14px">ext4</div>
<div class="t" style="left:482.4px;top:224.9px;letter-spacing:-0.36px">27.94 GiB</div>
<div class="t" style="left:560.2px;top:224.9px;letter-spacing:-0.21px">6.20 GiB</div>
<div class="t" style="left:638.0px;top:224.9px;letter-spacing:-0.56px">21.74 GiB</div>
<div class="t" style="left:694.0px;top:224.9px;transform:scaleX(1.156);transform-origin:0 0">boot</div>
<div class="t" style="left:280.4px;top:248.1px;letter-spacing:0.43px">/dev/sdb2</div>
<div class="t" style="left:380.7px;top:248.1px;letter-spacing:0.23px">extended</div>
<div class="t" style="left:476.0px;top:248.1px;letter-spacing:-0.35px">437.82 GiB</div>
<div class="t" style="left:591.3px;top:248.1px;letter-spacing:0.75px">---</div>
<div class="t" style="left:673.0px;top:248.1px;letter-spacing:0.75px">---</div>
<div class="t" style="left:295.7px;top:271.3px;letter-spacing:0.58px">/dev/sdb5</div>
<div class="t" style="left:380.7px;top:271.3px;letter-spacing:0.48px">linux-swap</div>
<div class="t" style="left:482.4px;top:271.3px;letter-spacing:-0.36px">14.90 GiB</div>
<div class="t" style="left:571.4px;top:271.3px;letter-spacing:-0.14px">0.00 B</div>
<div class="t" style="left:637.0px;top:271.3px;letter-spacing:-0.43px">14.90 GiB</div>
<div class="t" style="left:295.7px;top:294.5px;letter-spacing:0.58px;color:#fff">/dev/sdb6</div>
<div class="t" style="left:380.7px;top:294.5px;letter-spacing:0.14px;color:#fff">ext4</div>
<div class="t" style="left:475.0px;top:294.5px;letter-spacing:-0.24px;color:#fff">422.92 GiB</div>
<div class="t" style="left:563.1px;top:294.5px;letter-spacing:-0.63px;color:#fff">3.17 GiB</div>
<div class="t" style="left:632.4px;top:294.5px;letter-spacing:-0.62px;color:#fff">419.74 GiB</div>
<div class="t" style="left:279.4px;top:317.6px;letter-spacing:0.46px">unallocated</div>
<div class="t" style="left:380.7px;top:317.6px;letter-spacing:0.46px">unallocated</div>
<div class="t" style="left:487.4px;top:317.6px;letter-spacing:-0.27px">1.02 MiB</div>
<div class="t" style="left:591.3px;top:317.6px;letter-spacing:0.75px">---</div>
<div class="t" style="left:673.0px;top:317.6px;letter-spacing:0.75px">---</div>
<div class="t" style="left:32.8px;top:506.0px;letter-spacing:0.53px">0 operations pending</div>
</div>
<svg class="a" style="left:326px;top:114px" width="16" height="22" viewBox="0 0 16 22"><path d="M1.7 1.6V16.6L5.3 13.2L8.2 19.6L10.9 18.4L8 12.2H13Z" fill="#111" stroke="#f4f4f4" stroke-width="1.1" stroke-linejoin="round"/></svg>
</body></html>
